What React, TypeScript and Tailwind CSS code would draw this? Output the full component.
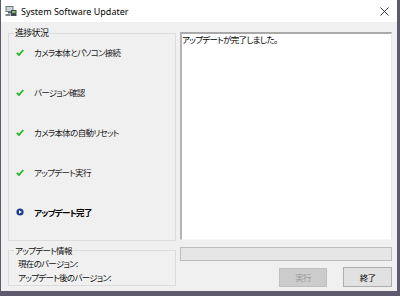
import React from 'react';

const jp = "font-['Noto_Sans_CJK_JP','Noto_Sans',sans-serif] [font-feature-settings:'palt']";

const steps = [
  { label: 'カメラ本体とパソコン接続', done: true },
  { label: 'バージョン確認', done: true },
  { label: 'カメラ本体の自動リセット', done: true },
  { label: 'アップデート実行', done: true },
  { label: 'アップデート完了', done: false },
];

const Check = () => (
  <svg width="8" height="7" viewBox="0 0 8 7">
    <path d="M0.8 3.8 L3 6 L7.2 1" fill="none" stroke="#2fb52f" strokeWidth="1.9" />
  </svg>
);

const Current = () => (
  <svg width="8" height="8" viewBox="0 0 8 8">
    <circle cx="4" cy="4" r="3.6" fill="#1f3b8c" />
    <path d="M3 2.2 L5.8 4 L3 5.8 Z" fill="#fff" />
  </svg>
);

const AppIcon = () => (
  <svg width="12" height="12" viewBox="0 0 12 12">
    <rect x="0.5" y="1" width="8" height="6" fill="#6b7a80" />
    <rect x="1.5" y="2" width="6" height="4" fill="#c9d3d6" />
    <rect x="3" y="7" width="3" height="1.5" fill="#56646a" />
    <rect x="6" y="5" width="5.5" height="6" fill="#3d4a4f" />
    <rect x="7" y="6" width="3.5" height="2" fill="#8fb96a" />
    <rect x="0.5" y="9" width="5" height="2" fill="#7d8a90" />
  </svg>
);

export default function App() {
  return (
    <div className="w-[400px] h-[296px] bg-[#5e596c] overflow-hidden">
      <div className="ml-[1px] w-[396px] h-[291px] flex flex-col bg-[#f0f0f0]">
        {/* title bar */}
        <div className="h-[22px] bg-white flex items-center pl-[4px] pr-[8px]">
          <AppIcon />
          <span className="ml-[4px] text-[9px] text-black font-['Noto_Sans',sans-serif] leading-none">
            System Software Updater
          </span>
          <div className="flex-1" />
          <svg width="9" height="9" viewBox="0 0 9 9">
            <path d="M0.5 0.5 L8.5 8.5 M8.5 0.5 L0.5 8.5" stroke="#222" strokeWidth="0.9" />
          </svg>
        </div>

        {/* body */}
        <div className={`flex-1 flex flex-col pl-[7px] pt-[5px] text-[8.5px] tracking-[-0.7px] ${jp}`}>
          <div className="flex gap-[4px]">
            <fieldset className="w-[168px] h-[214px] border border-[#dcdcdc] m-0 px-[7px] pt-[5px]">
              <legend className="ml-[-2px] px-[1px] text-[9px] leading-[12px] text-[#111]">進捗状況</legend>
              <div className="flex flex-col gap-[24px]">
                {steps.map((s) => (
                  <div key={s.label} className="h-[16px] flex items-center">
                    <div className="w-[18px] flex items-center">{s.done ? <Check /> : <Current />}</div>
                    <span className={`leading-none ${s.done ? 'text-[#1a1a1a]' : 'text-black font-bold'}`}>
                      {s.label}
                    </span>
                  </div>
                ))}
              </div>
            </fieldset>
            <div className="mt-[5px] w-[212px] h-[208px] bg-white border-t-2 border-l-2 border-t-[#a9a9a9] border-l-[#b5b5b5] border-r border-b border-r-[#e8e8e8] border-b-[#f5f5f5] pl-0 pt-0">
              <p className="leading-[10px] text-black">アップデートが完了しました。</p>
            </div>
          </div>

          <div className="flex gap-[4px] mt-[3px]">
            <fieldset className="w-[168px] h-[42px] border border-[#dcdcdc] m-0 px-[8px] pt-0">
              <legend className="ml-[-3px] px-[1px] leading-[12px] text-[#111]">アップデート情報</legend>
              <div className="h-[14px] flex items-center leading-none text-[#111] pl-[1px]">現在のバージョン:</div>
              <div className="h-[14px] flex items-center leading-none text-[#111] pl-[1px]">アップデート後のバージョン:</div>
            </fieldset>
            <div className="w-[212px] flex flex-col">
              <div className="mt-[3px] h-[14px] bg-[#e6e6e6] border border-[#bcbcbc]" />
              <div className="mt-[7px] flex justify-end gap-[16px]">
                <button
                  disabled
                  className="w-[48px] h-[19px] bg-[#cccccc] border border-[#bfbfbf] leading-none text-[#9a9a9a]"
                >
                  実行
                </button>
                <button className="w-[49px] h-[20px] -mt-[1px] bg-[#e1e1e1] border border-[#adadad] leading-none text-black">
                  終了
                </button>
              </div>
            </div>
          </div>
        </div>
      </div>
    </div>
  );
}
